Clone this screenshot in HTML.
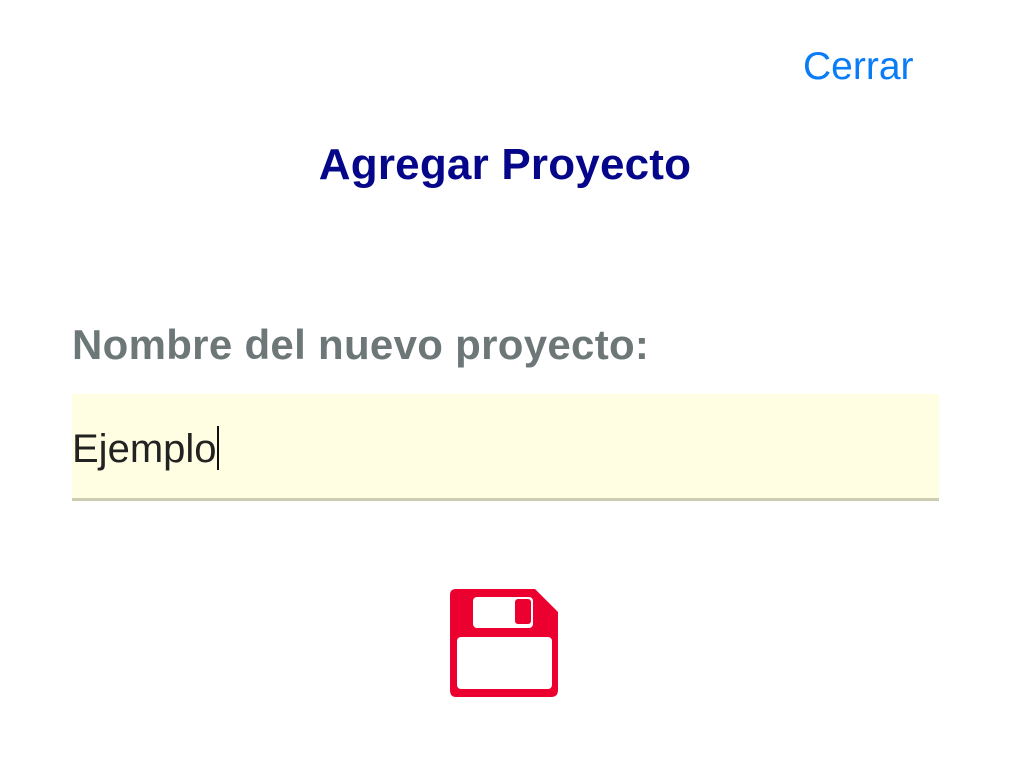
<html><head><style>
body{margin:0;width:1012px;height:768px;background:#fff;font-family:"Liberation Sans",sans-serif;position:relative;overflow:hidden}
.a{position:absolute;white-space:nowrap}
</style></head><body>
<div class="a" style="left:803px;top:45px;font-size:39px;color:#0a7cf6">Cerrar</div>
<div class="a" style="left:0;width:1010px;text-align:center;top:140px;font-size:44px;font-weight:bold;color:#06068a;letter-spacing:0.2px">Agregar Proyecto</div>
<div class="a" style="left:72px;top:321px;font-size:42px;font-weight:bold;color:#6e7777;letter-spacing:0.3px">Nombre del nuevo proyecto:</div>
<div class="a" style="left:72px;top:394px;width:867px;height:104px;background:#fffee2;border-bottom:3px solid #cdcdb4"></div>
<div class="a" style="left:72px;top:426px;font-size:40px;color:#222">Ejemplo<span style="display:inline-block;width:2px;height:44px;background:#111;vertical-align:-8px"></span></div>
<svg class="a" style="left:450px;top:589px" width="109" height="109" viewBox="0 0 109 109">
<path d="M6 0H85L108 23V101Q108 108 101 108H6Q0 108 0 101V6Q0 0 6 0Z" fill="#ec0030"/>
<rect x="23" y="8" width="60" height="31" rx="4" fill="#fff"/>
<rect x="65" y="10" width="16" height="25" rx="3" fill="#ec0030"/>
<rect x="7" y="48" width="95" height="52" rx="4" fill="#fff"/>
</svg>
</body></html>
